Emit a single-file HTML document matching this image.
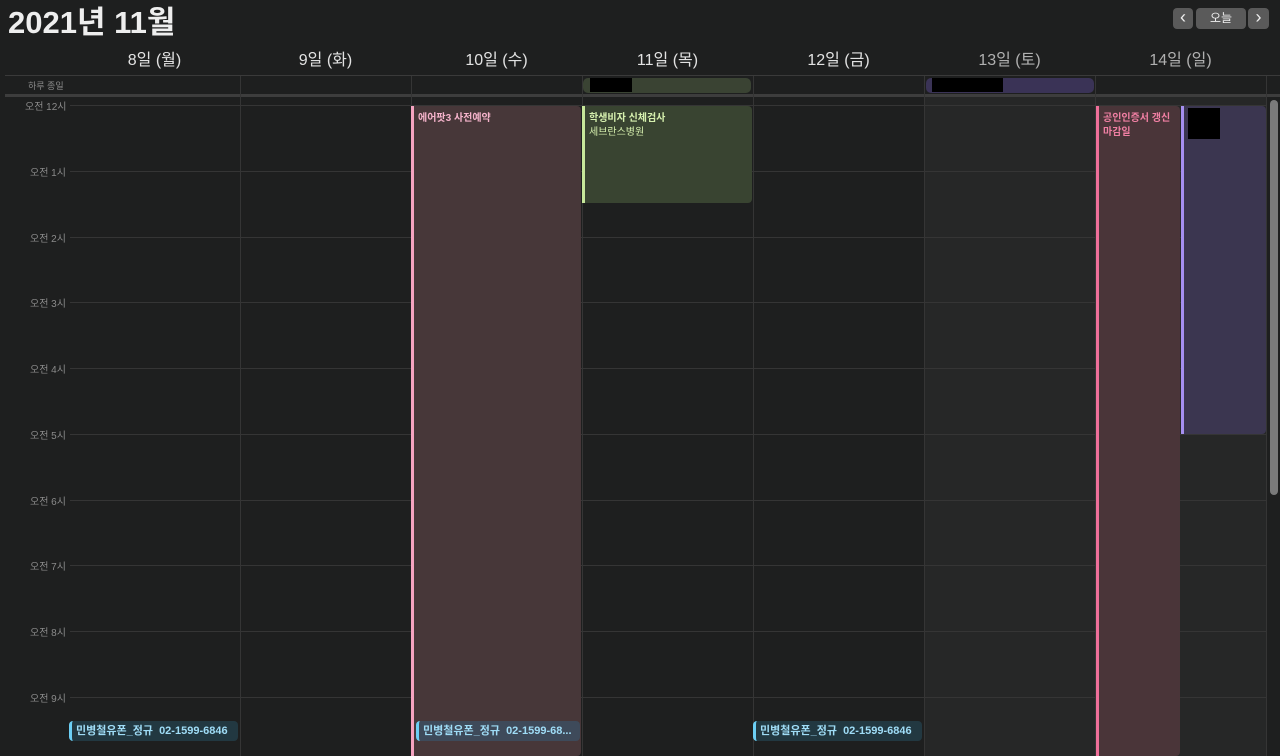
<!DOCTYPE html>
<html><head><meta charset="utf-8"><style>
*{margin:0;padding:0;box-sizing:border-box}
body{width:1280px;height:756px;background:#1e1f1f;overflow:hidden;position:relative;font-family:"Liberation Sans","Noto Sans CJK KR",sans-serif;color:#ddd}
.a{position:absolute}
.t{font-size:10px;color:#8a8a8a}
.dh{font-size:16px;color:#e2e2e2;text-align:center;width:171px;top:46px}
.vl{width:1px;background:#353535;top:76px;bottom:0}
.hl{height:1px;background:#353535;left:70px;right:14px}
.ev{font-size:10px;font-weight:bold;padding:6px 0 0 4px;line-height:14px;border-radius:0 4px 4px 0}
.pill{font-size:11px;font-weight:bold;color:#9fdcf6;height:20px;line-height:20px;padding-left:4px;border-left:3px solid #6ccff5;border-radius:4px;top:721px}
</style></head><body>
<div class="a" style="left:8px;top:-3px;font-size:31px;font-weight:bold;color:#eee">2021년 11월</div>
<div class="a" style="left:1173px;top:8px;width:20px;height:21px;background:#5a5a5a;border-radius:4px;color:#eee;text-align:center;font-size:18px;line-height:19px">&lsaquo;</div>
<div class="a" style="left:1196px;top:8px;width:50px;height:21px;background:#5a5a5a;border-radius:4px;color:#eee;text-align:center;font-size:12px;line-height:21px">오늘</div>
<div class="a" style="left:1248px;top:8px;width:21px;height:21px;background:#5a5a5a;border-radius:4px;color:#eee;text-align:center;font-size:18px;line-height:19px">&rsaquo;</div>
<div class="a" style="left:925px;top:96px;width:341px;bottom:0;background:#262727"></div>
<div class="a dh" style="left:69px">8일 (월)</div>
<div class="a dh" style="left:240px">9일 (화)</div>
<div class="a dh" style="left:411px">10일 (수)</div>
<div class="a dh" style="left:582px">11일 (목)</div>
<div class="a dh" style="left:753px">12일 (금)</div>
<div class="a dh" style="left:924px;color:#b0b0b0">13일 (토)</div>
<div class="a dh" style="left:1095px;color:#b0b0b0">14일 (일)</div>
<div class="a" style="left:5px;right:0;top:75px;height:1px;background:#3a3a3a"></div>
<div class="a" style="left:5px;right:0;top:94px;height:3px;background:#3d3d3d"></div>
<div class="a t" style="left:28px;top:79px;font-size:9px">하루 종일</div>
<div class="a vl" style="left:240px"></div><div class="a vl" style="left:411px"></div><div class="a vl" style="left:582px"></div><div class="a vl" style="left:753px"></div><div class="a vl" style="left:924px"></div><div class="a vl" style="left:1095px"></div><div class="a vl" style="left:1266px"></div>
<div class="a hl" style="top:105px"></div><div class="a hl" style="top:171px"></div><div class="a hl" style="top:237px"></div><div class="a hl" style="top:302px"></div><div class="a hl" style="top:368px"></div><div class="a hl" style="top:434px"></div><div class="a hl" style="top:500px"></div><div class="a hl" style="top:565px"></div><div class="a hl" style="top:631px"></div><div class="a hl" style="top:697px"></div>
<div class="a t" style="left:25px;top:98px">오전 12시</div>
<div class="a t" style="left:30px;top:164px">오전 1시</div>
<div class="a t" style="left:30px;top:230px">오전 2시</div>
<div class="a t" style="left:30px;top:295px">오전 3시</div>
<div class="a t" style="left:30px;top:361px">오전 4시</div>
<div class="a t" style="left:30px;top:427px">오전 5시</div>
<div class="a t" style="left:30px;top:493px">오전 6시</div>
<div class="a t" style="left:30px;top:558px">오전 7시</div>
<div class="a t" style="left:30px;top:624px">오전 8시</div>
<div class="a t" style="left:30px;top:690px">오전 9시</div>
<div class="a" style="left:583px;top:78px;width:168px;height:15px;background:#3a4333;border-radius:5px"></div>
<div class="a" style="left:590px;top:78px;width:42px;height:14px;background:#000"></div>
<div class="a" style="left:926px;top:78px;width:168px;height:15px;background:#3a3356;border-radius:5px"></div>
<div class="a" style="left:932px;top:78px;width:71px;height:14px;background:#000"></div>
<div class="a ev" style="left:411px;top:106px;width:170px;bottom:0;background:#473739;border-left:3px solid #f5a3c0;color:#f5b3cb">에어팟3 사전예약</div>
<div class="a ev" style="left:582px;top:106px;width:170px;height:97px;background:#394431;border-left:3px solid #c6e79a;color:#d6f0ae">학생비자 신체검사<br><span style="font-weight:normal">세브란스병원</span></div>
<div class="a ev" style="left:1096px;top:106px;width:84px;bottom:0;background:#4a3539;border-left:3px solid #ef6f9a;color:#f07fa3">공인인증서 갱신<br>마감일</div>
<div class="a ev" style="left:1181px;top:106px;width:85px;height:328px;background:#3b3650;border-left:3px solid #a58ff0"></div>
<div class="a" style="left:1188px;top:108px;width:32px;height:31px;background:#000"></div>
<div class="a pill" style="left:69px;width:169px;background:#223841">민병철유폰_정규 &nbsp;02-1599-6846</div>
<div class="a pill" style="left:416px;width:164px;background:#3e4a5a">민병철유폰_정규 &nbsp;02-1599-68...</div>
<div class="a pill" style="left:753px;width:169px;background:#223841">민병철유폰_정규 &nbsp;02-1599-6846</div>
<div class="a" style="left:1270px;top:100px;width:8px;height:395px;background:#7a7a7a;border-radius:4px"></div>
</body></html>
